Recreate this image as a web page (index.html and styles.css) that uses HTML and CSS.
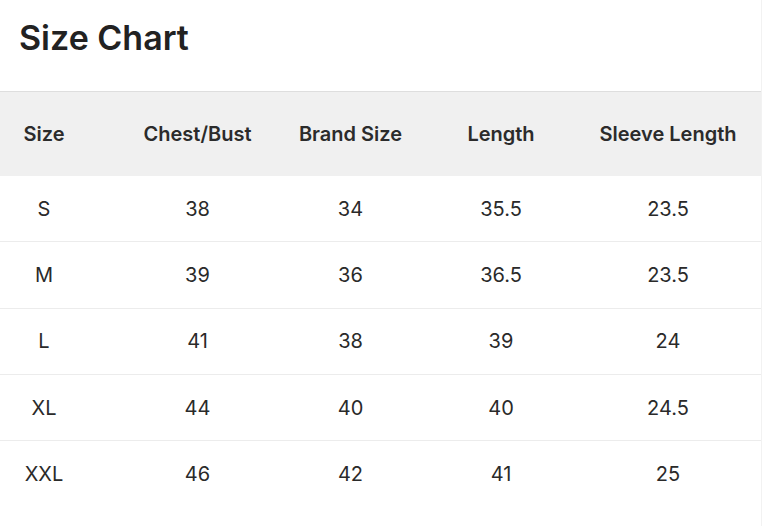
FILE: index.html
```html
<!DOCTYPE html>
<html lang="en">
<head>
<meta charset="utf-8">
<title>Size Chart</title>
<link rel="stylesheet" href="styles.css">
</head>
<body>
<div class="page">
  <h1 class="title">Size Chart</h1>
  <div class="chart">
    <div class="row head">
      <div class="cell first">Size</div>
      <div class="cell">Chest/Bust</div>
      <div class="cell">Brand Size</div>
      <div class="cell">Length</div>
      <div class="cell">Sleeve Length</div>
    </div>
    <div class="row">
      <div class="cell first">S</div>
      <div class="cell">38</div>
      <div class="cell">34</div>
      <div class="cell">35.5</div>
      <div class="cell">23.5</div>
    </div>
    <div class="row">
      <div class="cell first">M</div>
      <div class="cell">39</div>
      <div class="cell">36</div>
      <div class="cell">36.5</div>
      <div class="cell">23.5</div>
    </div>
    <div class="row">
      <div class="cell first">L</div>
      <div class="cell">41</div>
      <div class="cell">38</div>
      <div class="cell">39</div>
      <div class="cell">24</div>
    </div>
    <div class="row">
      <div class="cell first">XL</div>
      <div class="cell">44</div>
      <div class="cell">40</div>
      <div class="cell">40</div>
      <div class="cell">24.5</div>
    </div>
    <div class="row last">
      <div class="cell first">XXL</div>
      <div class="cell">46</div>
      <div class="cell">42</div>
      <div class="cell">41</div>
      <div class="cell">25</div>
    </div>
  </div>
</div>
</body>
</html>
```
FILE: styles.css
```css
html, body {
  margin: 0;
  padding: 0;
  background: #ffffff;
}
body {
  font-family: Inter, "Noto Sans", "Liberation Sans", sans-serif;
  color: #222222;
}
.page {
  width: 762px;
  border-right: 1px solid #f2f2f2;
  min-height: 526px;
  box-sizing: border-box;
}
.title {
  margin: 0;
  padding: 18px 19px 0;
  height: 91px;
  box-sizing: border-box;
  font-size: 34px;
  line-height: 40px;
  font-weight: 600;
  color: #222222;
  letter-spacing: 0;
}
.chart {
  width: 761px;
  border-top: 1px solid #dedede;
}
.row {
  display: grid;
  grid-template-columns: 121px 153px 153px 148px 1fr;
  height: 65.33px;
  border-bottom: 1px solid #ececec;
  font-size: 20px;
  color: #2a2a2a;
}
.row.head {
  height: 84px;
  background: #f0f0f0;
  border-bottom: none;
  font-weight: 600;
  color: #2b2b2b;
}
.row.last {
  border-bottom: none;
}
.cell {
  display: flex;
  align-items: center;
  justify-content: center;
  white-space: nowrap;
}
.cell.first {
  padding-right: 33px;
}
```
